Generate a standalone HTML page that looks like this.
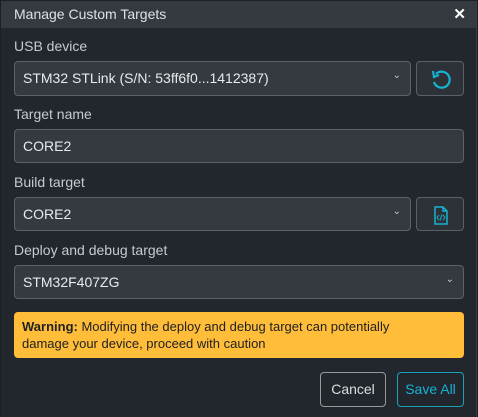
<!DOCTYPE html><html><head><style>
body{margin:0;width:478px;height:417px;background:#1c2025;font-family:"Liberation Sans",sans-serif;overflow:hidden}
.dlg{position:absolute;left:1px;top:1px;width:475px;height:416px;background:#22272e;border-right:1px solid #3a3f45}
.title{height:27px;background:#343a40;color:#dde1e5;font-size:14px;line-height:27px;padding-left:13px;position:relative}
.x{position:absolute;right:10px;top:0;font-weight:bold;font-size:15px;color:#fff}
.lbl{position:absolute;left:13px;color:#c5cad0;font-size:14px}
.box{position:absolute;height:32px;background:#343a40;border:1px solid #5a6168;border-radius:4px;box-sizing:border-box;color:#e8eaed;font-size:14px;line-height:31px;padding-left:8px}
.chev{position:absolute;right:9px;top:-3px;color:#ccc;font-size:10px}
.btn{position:absolute;border:1px solid #5a6168;border-radius:4px;box-sizing:border-box;background:#2c3238}
.warn{position:absolute;left:13px;top:311px;width:450px;height:46px;background:#ffbd39;border-radius:4px;box-sizing:border-box;padding:6px 40px 6px 8px;font-size:13px;line-height:17px;color:#222}
</style></head><body><div class="dlg">
<div class="title">Manage Custom Targets<span class="x">✕</span></div>
<div class="lbl" style="top:37px">USB device</div>
<div class="box" style="left:13px;top:60px;width:397px;height:35px;line-height:33px">STM32 STLink (S/N: 53ff6f0...1412387)<span class="chev">⌄</span></div>
<div class="btn" style="left:415px;top:60px;width:48px;height:35px"><svg width="48" height="35" viewBox="0 0 48 35"><path d="M19 12 A8 8 0 1 1 17 20" fill="none" stroke="#17b3d2" stroke-width="2.2"/><path d="M16 9 L17 15 L22 13" fill="none" stroke="#17b3d2" stroke-width="2.2"/></svg></div>
<div class="lbl" style="top:105px">Target name</div>
<div class="box" style="left:13px;top:128px;width:450px;height:34px;line-height:33px">CORE2</div>
<div class="lbl" style="top:173px">Build target</div>
<div class="box" style="left:13px;top:196px;width:397px;height:34px;line-height:33px">CORE2<span class="chev">⌄</span></div>
<div class="btn" style="left:415px;top:196px;width:48px;height:34px"><svg width="48" height="34" viewBox="0 0 48 34"><path d="M18 9 H26 L30 13 V26 H18 Z M26 9 V13 H30" fill="none" stroke="#17b3d2" stroke-width="1.5"/><path d="M22 17 L20 19.5 L22 22 M26 17 L28 19.5 L26 22 M25 16.5 L23 22.5" fill="none" stroke="#17b3d2" stroke-width="1"/></svg></div>
<div class="lbl" style="top:241px">Deploy and debug target</div>
<div class="box" style="left:13px;top:264px;width:450px;height:34px;line-height:33px">STM32F407ZG<span class="chev">⌄</span></div>
<div class="warn"><b>Warning:</b> Modifying the deploy and debug target can potentially damage your device, proceed with caution</div>
<div class="btn" style="left:319px;top:371px;width:66px;height:35px;background:#22272e;border-color:#999;color:#ddd;font-size:14px;text-align:center;line-height:33px">Cancel</div>
<div class="btn" style="left:396px;top:371px;width:67px;height:35px;background:#22272e;border-color:#17a2b8;color:#17b3d2;font-size:14px;text-align:center;line-height:33px">Save All</div>
</div></body></html>
